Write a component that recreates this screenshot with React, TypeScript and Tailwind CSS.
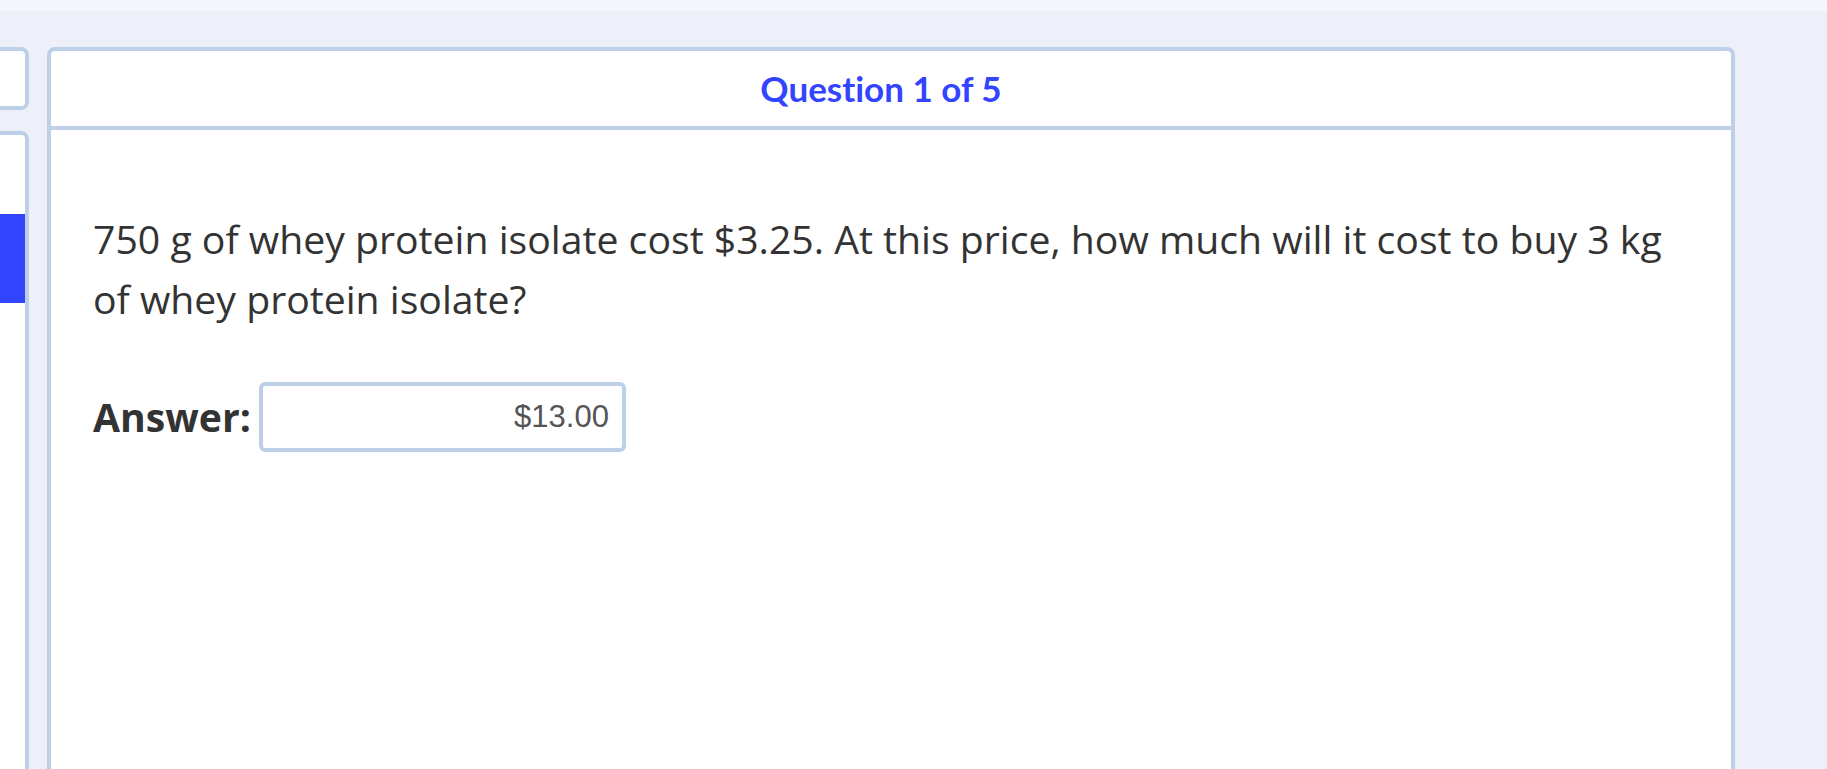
import React from "react";

function Sidebar() {
  return (
    <div className="ml-[-200px] w-[229px] shrink-0 flex flex-col">
      {/* top box */}
      <div className="h-[63px] bg-white border-4 border-[#bdd0e8] rounded-lg" />
      {/* nav box */}
      <div className="mt-[21px] h-[700px] bg-white border-4 border-[#bdd0e8] rounded-lg overflow-hidden">
        <div className="mt-[79px] h-[89px] bg-[#3344ff]" />
      </div>
    </div>
  );
}

function QuestionCard() {
  return (
    <div className="ml-[18px] w-[1688px] h-[760px] shrink-0 bg-white border-4 border-b-0 border-[#bdd0e8] rounded-t-lg flex flex-col">
      <div className="h-[79px] shrink-0 border-b-4 border-[#bdd0e8] flex items-center justify-center pr-[20px]">
        <h2 className="font-['Lato',sans-serif] font-bold text-[35px] leading-none text-[#3344ff] [font-variant-ligatures:none]">
          Question 1 of 5
        </h2>
      </div>
      <div className="px-[42px] pt-[79px] font-['Open_Sans',sans-serif] text-[#333]">
        <p className="text-[39.2px] leading-[60px]">
          750 g of whey protein isolate cost $3.25. At this price, how much will it cost to buy 3 kg of whey
          protein isolate?
        </p>
        <div className="mt-[53px] flex items-center">
          <span className="text-[39.2px] leading-[60px] font-bold">Answer:</span>
          <input
            readOnly
            value="$13.00"
            className="ml-[8px] w-[367px] h-[70px] border-4 border-[#bdd0e8] rounded-md bg-white text-right pr-[13px] font-['Liberation_Sans',Arial,sans-serif] text-[31px] text-[#555] outline-none"
          />
        </div>
      </div>
    </div>
  );
}

export default function App() {
  return (
    <div className="w-full h-[769px] overflow-hidden bg-[#edf0f9] flex flex-col">
      <div className="h-[11px] shrink-0 bg-[#f5f6fb]" />
      <div className="pt-[36px] flex">
        <Sidebar />
        <QuestionCard />
      </div>
    </div>
  );
}
